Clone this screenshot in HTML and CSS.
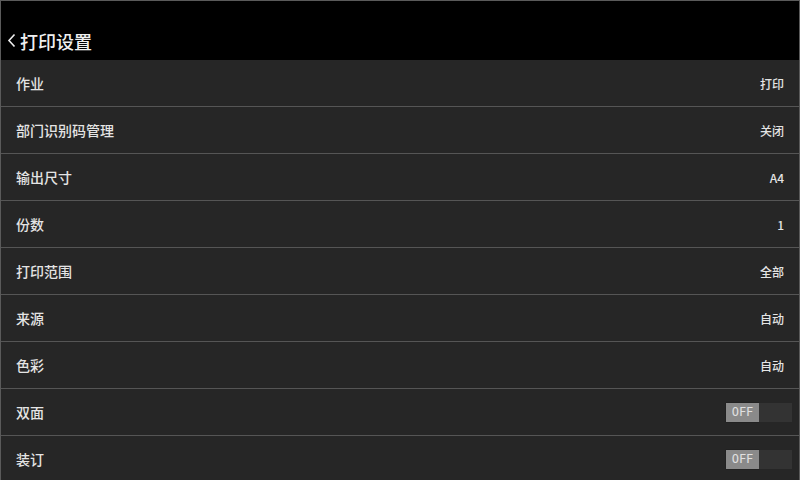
FILE: index.html
```html
<!DOCTYPE html>
<html lang="zh-CN">
<head>
  <meta charset="UTF-8">
  <title>打印设置</title>
  <link rel="stylesheet" href="styles.css">
</head>
<body>
  <div class="screen">
    <div class="header">
      <svg class="back" width="10" height="15" viewBox="0 0 10 15">
        <polyline points="7.5,1.5 2,7.5 7.5,13.5" fill="none" stroke="#eee" stroke-width="1.6"/>
      </svg>
      <span class="title">打印设置</span>
    </div>

    <div class="list">
      <div class="row"><span class="label">作业</span><span class="value">打印</span></div>
      <div class="row"><span class="label">部门识别码管理</span><span class="value">关闭</span></div>
      <div class="row"><span class="label">输出尺寸</span><span class="value">A4</span></div>
      <div class="row"><span class="label">份数</span><span class="value">1</span></div>
      <div class="row"><span class="label">打印范围</span><span class="value">全部</span></div>
      <div class="row"><span class="label">来源</span><span class="value">自动</span></div>
      <div class="row"><span class="label">色彩</span><span class="value">自动</span></div>
      <div class="row">
        <span class="label">双面</span>
        <span class="toggle"><span class="toggle-off">OFF</span><span class="toggle-track"></span></span>
      </div>
      <div class="row last">
        <span class="label">装订</span>
        <span class="toggle"><span class="toggle-off">OFF</span><span class="toggle-track"></span></span>
      </div>
    </div>
  </div>
</body>
</html>
```

FILE: styles.css
```css
html, body {
  margin: 0;
  padding: 0;
  height: 100%;
  overflow: hidden;
  background: #262626;
}

.screen {
  box-sizing: border-box;
  width: 800px;
  height: 480px;
  border-top: 1px solid #5a5a5a;
  border-left: 1px solid #5a5a5a;
  border-right: 1px solid #5a5a5a;
  font-family: "Noto Sans CJK SC", "Noto Sans", sans-serif;
  display: flex;
  flex-direction: column;
}

.header {
  flex-shrink: 0;
  height: 59px;
  background: #000;
  display: flex;
  align-items: flex-end;
  padding: 0 0 8px 6px;
  box-sizing: border-box;
  gap: 3px;
}

.back {
  margin-bottom: 4px;
}

.title {
  color: #f0f0f0;
  font-size: 18px;
  font-weight: 500;
  line-height: 22px;
}

.list {
  flex: 1;
  overflow: hidden;
  background: #262626;
}

.row {
  height: 46px;
  border-bottom: 1px solid #555;
  display: flex;
  align-items: center;
  justify-content: space-between;
  padding: 0 15px 0 15px;
}

.row.last {
  border-bottom: none;
}

.label {
  color: #e4e4e4;
  font-size: 14px;
  font-weight: 500;
}

.value {
  color: #e4e4e4;
  font-size: 12px;
  font-weight: 500;
}

/* toggle switch */
.toggle {
  display: flex;
  height: 19px;
  margin-right: -8px;
}

.toggle-off {
  width: 33px;
  background: #8a8a8a;
  color: #e0e0e0;
  font-family: "DejaVu Sans Mono", monospace;
  font-size: 12px;
  line-height: 19px;
  text-align: center;
  box-shadow: 0 0 1px #111;
}

.toggle-track {
  width: 33px;
  background: #333;
}
```
